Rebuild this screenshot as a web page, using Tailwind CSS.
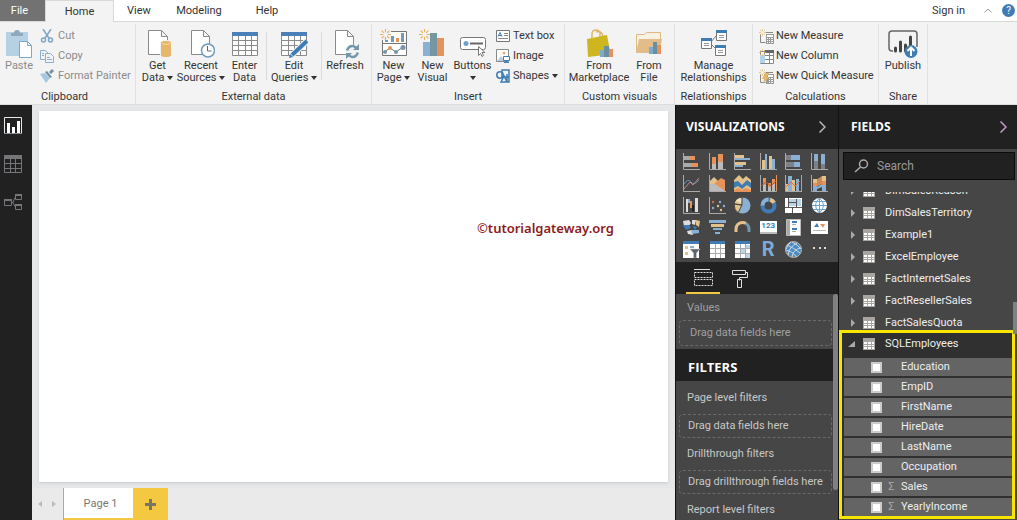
<!DOCTYPE html>
<html lang="en">
<head>
    <meta charset="UTF-8">
    <meta name="viewport" content="width=device-width, initial-scale=1.0">
    <title>Report Designer</title>
    <script src="https://cdn.jsdelivr.net/npm/@tailwindcss/browser@4"></script>
</head>
<body class="flex flex-col h-screen overflow-hidden bg-[#e6e7e8] font-['Roboto','Open_Sans',sans-serif] text-[11px] leading-3 text-[#333]">

    <!-- Shared icons -->
    <svg class="hidden">
        <symbol id="table" viewBox="0 0 12 12"><path fill="#a8a4a0" d="M0 0h12v12H0z"/><path fill="#fff" d="M1 4h3v2H1zM5 4h3v2H5zM9 4h2v2H9zM1 7h3v1H1zM5 7h3v1H5zM9 7h2v1H9zM1 9h3v2H1zM5 9h3v2H5zM9 9h2v2H9z"/></symbol>
        <symbol id="spark" viewBox="0 0 10 10"><path stroke="#e3b15f" d="M5 0v3M5 7v3M0 5h3M7 5h3M1.500 1.500l2 2M6.500 6.500l2 2M8.500 1.500l-2 2M3.500 6.500l-2 2"/></symbol>
        <symbol id="grid" viewBox="0 0 26 24"><path fill="#fff" stroke="#8a8a8a" d="M.5.5h25v23H.5z"/><path fill="#4a7fb8" d="M0 0h26v4H0z"/><path stroke="#8a8a8a" d="M0 8.500h26M0 13.500h26M0 18.500h26M6.500 4v20M13.500 4v20M19.500 4v20"/></symbol>
    </svg>

    <!-- Tabs -->
    <header class="flex h-[22px] shrink-0 items-stretch bg-white border-b border-[#d8dada]">
        <button class="w-[45px] pr-1.5 bg-[#727272] text-white">File</button>
        <nav class="flex">
            <button class="w-[69px] -mb-px bg-[#f3f3f3] border-x border-t border-[#d8dada]">Home</button>
            <button class="w-[50px]">View</button>
            <button class="w-[70px]">Modeling</button>
            <button class="w-[66px]">Help</button>
        </nav>
        <div class="ml-auto flex items-center">
            <button class="mr-[19px]">Sign in</button>
            <button aria-label="Collapse ribbon" class="mr-2.5"><svg width="8" height="5" fill="none" stroke="#999"><path d="M.5 4.500L4 1l3.500 3.500"/></svg></button>
            <button aria-label="Help" class="size-[13px] mr-0.5 rounded-full bg-[#3e7cb6] text-white text-[10px]">?</button>
        </div>
    </header>

    <!-- Ribbon -->
    <div class="flex h-[83px] shrink-0 bg-[#f3f3f3] border-b border-[#dcdddd] overflow-hidden">
        <section class="flex flex-col w-[136px] shrink-0 border-r border-[#e0e1e2] mt-0.5">
            <div class="flex flex-1 text-[#8b8b8b]">
                <button class="flex flex-col items-center w-9 pt-1 pl-0.5">
                    <svg class="h-8 w-7" viewBox="0 0 28 32"><path fill="#b4d2e4" d="M1 4h22v24H1z"/><path fill="#8fa9bb" d="M6 8V5h3q0-3 3-3t3 3h3v3z"/><path fill="#fff" stroke="#7fa9c9" d="M14.500 13.500h8l4 4v12h-12z"/><path fill="none" stroke="#7fa9c9" d="M22.500 13.500v4h4"/></svg>
                    <span>Paste</span>
                </button>
                <div class="flex flex-col pt-0.5 pl-1">
                    <button class="flex items-center gap-1 h-5"><svg width="14" height="14" fill="none" stroke="#7ea6c4" stroke-width="1.500"><path d="M3 0l6.500 10M11 0L4.500 10"/><circle cx="3.500" cy="11" r="2"/><circle cx="10.500" cy="11" r="2"/></svg>Cut</button>
                    <button class="flex items-center gap-1 h-5"><svg width="14" height="14" fill="#f3f3f3" stroke="#8ab0cb"><path d="M.5 1.500h5l2 2v7h-7z"/><path d="M5.500 4.500h5l3 3v6h-8zM7 8.500h3M7 10.500h5M2 4.500h2M2 6.500h2"/></svg>Copy</button>
                    <button class="flex items-center gap-1 h-5 whitespace-nowrap"><svg width="14" height="14"><path fill="#a3c9e2" d="M0 5l5-1 5 5-4 5z"/><path fill="#718fa6" d="M5 3l2-1 5 6-2 1zM9 3l3-3 2 2-3 3z"/></svg>Format Painter</button>
                </div>
            </div>
            <h2 class="mb-px pr-1.5 text-center">Clipboard</h2>
        </section>

        <section class="flex flex-col w-[236px] shrink-0 border-r border-[#e0e1e2] mt-0.5">
            <div class="flex flex-1">
                <button class="flex flex-col items-center w-[43px] pt-1">
                    <svg class="h-8 w-7" viewBox="0 0 28 32"><path fill="#fff" stroke="#8a8a8a" d="M4.500 2.500h13l6 6v18h-19zM17.500 2.500v6h6"/><path fill="#e6b768" stroke="#f3f3f3" d="M16.500 15q0-2.500 5.500-2.500t5.500 2.500v12q0 2.500-5.500 2.500t-5.500-2.500z"/><path fill="none" stroke="#f6dca9" d="M18 15.500q4 2 8 0"/></svg>
                    <span class="whitespace-nowrap">Get<br>Data <span class="inline-block align-middle border-x-3 border-t-4 border-x-transparent border-t-[#333]"></span></span>
                </button>
                <button class="flex flex-col items-center w-[44px] pt-1">
                    <svg class="h-8 w-7" viewBox="0 0 28 32"><path fill="#fff" stroke="#8a8a8a" d="M4.500 2.500h12l6 6v18h-18zM16.500 2.500v6h6"/><circle cx="21" cy="22.500" r="6.500" fill="#fff" stroke="#6f9cbd" stroke-width="1.500"/><path fill="none" stroke="#4d6d85" d="M20.500 18v5h4"/></svg>
                    <span class="whitespace-nowrap">Recent<br>Sources <span class="inline-block align-middle border-x-3 border-t-4 border-x-transparent border-t-[#333]"></span></span>
                </button>
                <button class="flex flex-col items-center w-[43px] pt-1">
                    <svg class="h-8 w-[26px] py-1"><use href="#grid"/></svg>
                    <span>Enter<br>Data</span>
                </button>
                <div class="w-px h-12 mt-2 bg-[#d9dadb]"></div>
                <button class="flex flex-col items-center w-[54px] pt-1">
                    <svg class="h-8 w-7" viewBox="0 0 28 32"><path fill="#fff" stroke="#8a8a8a" d="M1.500 4.500h25v23h-25zM1 12.500h26M1 17.500h26M1 22.500h26M8.500 8v20M14.500 8v20M20.500 8v20"/><path fill="#4a7fb8" d="M1 4h26v4H1z"/><path stroke="#f3f3f3" stroke-width="6" d="M11 28L27 13"/><path stroke="#3e7cb6" stroke-width="4" d="M12 27L27 13"/><path fill="#3e7cb6" d="M9 30l1-4 3 3z"/></svg>
                    <span class="whitespace-nowrap">Edit<br>Queries <span class="inline-block align-middle border-x-3 border-t-4 border-x-transparent border-t-[#333]"></span></span>
                </button>
                <div class="w-px h-12 mt-2 bg-[#d9dadb]"></div>
                <button class="flex flex-col items-center w-[46px] pt-1">
                    <svg class="h-8 w-7" viewBox="0 0 28 32"><path fill="#fff" stroke="#8a8a8a" d="M4.500 2.500h12l6 6v18h-18zM16.500 2.500v6h6"/><circle cx="21.500" cy="23.500" r="7" fill="#f3f3f3"/><path fill="none" stroke="#7497aa" stroke-width="2.500" d="M16 22.500q2-5 6-4.500l4 2M27 24.500q-2 5-6 4.500l-4-2"/><path fill="#7497aa" d="M28 16v6h-6zM15 31v-6h6z"/></svg>
                    <span>Refresh</span>
                </button>
            </div>
            <h2 class="mb-px text-center">External data</h2>
        </section>

        <section class="flex flex-col w-[193px] shrink-0 border-r border-[#e0e1e2] mt-0.5">
            <div class="flex flex-1">
                <button class="flex flex-col items-center w-[43px] pt-1">
                    <svg class="h-8 w-7" viewBox="0 0 28 32"><path fill="#fff" stroke="#777" d="M2.500 3.500h24v24h-24zM2 15.500h25"/><path fill="#f3f3f3" d="M0 0h11v12H0z"/><use href="#spark" y="1" width="11" height="11"/><path fill="#6f9cbd" d="M5 12h3v2H5zM11 8h3v6h-3zM21 5h3v9h-3z"/><path fill="#e5935a" d="M16 10h3v4h-3z"/><path fill="none" stroke="#777" d="M4 24l6-4 6 4 7-5"/><g fill="#7497aa"><circle cx="5" cy="24" r="2"/><circle cx="16" cy="24" r="2"/><circle cx="23" cy="19.500" r="2.500"/></g><circle cx="10" cy="20" r="2" fill="#e5935a"/></svg>
                    <span class="whitespace-nowrap">New<br>Page <span class="inline-block align-middle border-x-3 border-t-4 border-x-transparent border-t-[#333]"></span></span>
                </button>
                <button class="flex flex-col items-center w-[35px] pt-1">
                    <svg class="h-8 w-7" viewBox="0 0 28 32"><path fill="#8ab0d3" d="M4 14h7v14H4z"/><path fill="#7497a4" d="M11 5h7v23h-7z"/><path fill="#e5935a" d="M18 10h7v18h-7z"/><use href="#spark" y="1" width="11" height="11"/></svg>
                    <span>New<br>Visual</span>
                </button>
                <button class="flex flex-col items-center w-[45px] pt-1">
                    <svg class="h-8 w-7" viewBox="0 0 28 32"><rect x="1.500" y="9.500" width="25" height="12" rx="2" fill="#fff" stroke="#777"/><circle cx="7" cy="15.500" r="2.500" fill="#6fa0cc"/><path stroke="#666" stroke-width="2" d="M11 15.500h13"/><path fill="#fff" stroke="#777" d="M19.500 18.500v9l2-2 1.500 3 1.500-1-1.500-3h3z"/></svg>
                    <span>Buttons</span>
                    <span class="mt-1 border-x-3 border-t-4 border-x-transparent border-t-[#333]"></span>
                </button>
                <div class="flex flex-col pt-0.5 pl-px">
                    <button class="flex items-center gap-[3px] h-5"><svg width="14" height="12"><path fill="#fff" stroke="#777" d="M.5.5h13v11H.5z"/><path fill="none" stroke="#3e7cb6" d="M2 6.500l2-4 2 4M3 5.500h2"/><path stroke="#888" d="M8 3.500h4M8 5.500h4M2 8.500h10"/></svg>Text box</button>
                    <button class="flex items-center gap-[3px] h-5"><svg width="14" height="14"><path fill="#fff" stroke="#888" d="M.5.5h12v12H.5z"/><path fill="#b9cfdf" d="M1 12l4-5 3 4v1z"/><circle cx="8" cy="4" r="1.500" fill="#e6b768"/><path fill="#fff" stroke="#3e7cb6" d="M7.500 7.500h6v4h-6zM10.500 11.500v2M8 13.500h5"/></svg>Image</button>
                    <button class="flex items-center gap-[3px] h-5 whitespace-nowrap"><svg width="14" height="14" fill="none" stroke="#3e7cb6" stroke-width="1.500"><circle cx="4" cy="6" r="3.200"/><path d="M6 1h7v7H6zM5 13l3-6 3 6zM11 5v8h2V8"/></svg>Shapes <span class="border-x-3 border-t-4 border-x-transparent border-t-[#333]"></span></button>
                </div>
            </div>
            <h2 class="mb-px text-center">Insert</h2>
        </section>

        <section class="flex flex-col w-[110px] shrink-0 border-r border-[#e0e1e2] mt-0.5">
            <div class="flex flex-1">
                <button class="flex flex-col items-center w-[68px] pt-1">
                    <svg class="h-8 w-7" viewBox="0 0 28 32"><path fill="none" stroke="#e0b569" stroke-width="1.500" d="M7 11V6q0-4 4-4t4 4v4M11 4q5-2 7 4"/><path fill="#cdb61f" d="M2 11l20-4 3 16-5 4-17 2z"/><path fill="#7cabd0" d="M15 22h4v7h-4z"/><path fill="#6990a0" d="M19 18h5v11h-5z"/><path fill="#e5935a" d="M24 21h4v8h-4z"/></svg>
                    <span>From<br>Marketplace</span>
                </button>
                <button class="flex flex-col items-center w-[32px] pt-1">
                    <svg class="h-8 w-7" viewBox="0 0 28 32"><path fill="#fbf1e0" stroke="#dfb986" d="M1.500 24.500v-18h8l2-2h14v20z"/><path fill="#e2bd89" d="M4 11h23l-3 14H1z"/><path fill="#7cabd0" d="M14 19h4v7h-4z"/><path fill="#6990a0" d="M18 14h4v12h-4z"/><path fill="#e5935a" d="M22 17h4v9h-4z"/></svg>
                    <span>From<br>File</span>
                </button>
            </div>
            <h2 class="mb-px text-center">Custom visuals</h2>
        </section>

        <section class="flex flex-col w-[78px] shrink-0 border-r border-[#e0e1e2] mt-0.5">
            <button class="flex flex-1 flex-col items-center pt-1">
                <svg class="h-8 w-7" viewBox="0 0 28 32"><path fill="none" stroke="#777" d="M10 15l7-8M10 15l6 6"/><path fill="#fff" stroke="#777" d="M16.500 3.500h10v9h-10zM1.500 11.500h10v9h-10zM15.500 18.500h10v9h-10z"/><path fill="#3e7cb6" d="M16 2h11v3H16zM1 10h11v3H1zM15 17h11v3H15z"/><path stroke="#999" d="M19 7.500h5M19 9.500h5M4 15.500h5M4 17.500h5M18 22.500h5M18 24.500h5"/></svg>
                <span>Manage<br>Relationships</span>
            </button>
            <h2 class="mb-px text-center">Relationships</h2>
        </section>

        <section class="flex flex-col w-[126px] shrink-0 border-r border-[#e0e1e2] mt-0.5">
            <div class="flex flex-1 flex-col items-start pt-0.5 pl-1.5 whitespace-nowrap">
                <button class="flex items-center gap-0.5 h-5"><svg width="15" height="15"><path fill="none" stroke="#888" d="M1.500 5v8.500h5M7 3.500h7"/><path fill="#999" d="M7 5h8v10H7z"/><path fill="#fff" d="M8 6h6v2H8zM8 9h1v1H8zM10 9h1v1h-1zM12 9h2v1h-2zM8 11h1v1H8zM10 11h1v1h-1zM12 11h2v1h-2zM8 13h1v1H8zM10 13h1v1h-1zM12 13h2v1h-2z"/><use href="#spark" width="7" height="7"/></svg>New Measure</button>
                <button class="flex items-center gap-0.5 h-5"><svg width="15" height="15"><path fill="#fff" stroke="#888" d="M1.500 2.500h13v12h-13zM1 6.500h14M1 10.500h14M5.500 3v12M10.500 3v12"/><path fill="#666" d="M6 1h9v3H6z"/><path fill="#b5d3e8" d="M1 6h5v8H1z"/><use href="#spark" width="7" height="7"/></svg>New Column</button>
                <button class="flex items-center gap-0.5 h-5"><svg width="15" height="15"><path fill="none" stroke="#888" d="M1.500 5v8.500h5M7 3.500h7"/><path fill="#999" d="M7 5h8v10H7z"/><path fill="#fff" d="M9 6h5v2H9zM10 9h1v1h-1zM12 9h2v1h-2zM10 11h1v1h-1zM12 11h2v1h-2zM10 13h1v1h-1zM12 13h2v1h-2z"/><path fill="#e6b768" d="M6 4h4L8 8h2l-6 7 1-5H3z"/><use href="#spark" width="7" height="7"/></svg>New Quick Measure</button>
            </div>
            <h2 class="mb-px text-center">Calculations</h2>
        </section>

        <section class="flex flex-col w-[49px] shrink-0 border-r border-[#e0e1e2] mt-0.5">
            <button class="flex flex-1 flex-col items-center pt-1">
                <svg class="h-8 w-[30px]" viewBox="0 0 30 32"><path fill="none" stroke="#666" stroke-width="1.500" d="M5 23H4q-3 0-3-3V6q0-3 3-3h22q3 0 3 3v13"/><path stroke="#444" stroke-width="3" stroke-linecap="round" d="M7.500 20v3M12.500 14v9M17.500 17v6M22.500 9v8"/><circle cx="23" cy="23.500" r="6.500" fill="#3e7cb6"/><path fill="none" stroke="#fff" stroke-width="2" d="M23 28v-8M19.500 23l3.500-3.500 3.500 3.500"/></svg>
                <span>Publish</span>
            </button>
            <h2 class="mb-px text-center">Share</h2>
        </section>
    </div>

    <div class="flex flex-1 min-h-0">
        <!-- View switcher -->
        <nav class="flex flex-col items-center gap-5 w-8 shrink-0 pt-3 pr-1.5 bg-[#212121]">
            <button aria-label="Report"><svg width="18" height="18"><path fill="none" stroke="#e8e8e8" d="M.5.5h17v16H.5z"/><path fill="#fff" d="M3 6h3v10H3zM8 10h3v6H8zM13 4h3v12h-3z"/><path fill="#8a9299" d="M0 16h18v1H0z"/></svg></button>
            <button aria-label="Data"><svg width="18" height="18"><path fill="none" stroke="#75767a" d="M.5.5h17v17H.5zM0 8.500h18M0 13.500h18M6.500 4v14M11.500 4v14"/><path fill="#75767a" d="M0 0h18v4H0z"/></svg></button>
            <button aria-label="Relationships"><svg width="18" height="18" fill="none" stroke="#75767a"><path d="M.5 6.500h7v6h-7zM11.500 1.500h6v5h-6zM11.500 11.500h6v5h-6zM7 9.500h2l2-5M9 9.500l2 4"/><path stroke-width="2" d="M0 7h8M11 2h7M11 12h7"/></svg></button>
        </nav>

        <!-- Canvas -->
        <main class="flex flex-1 flex-col min-w-0">
            <div class="flex-1 my-1.5 mx-[7px] bg-white shadow-sm flex justify-center">
                <p class="mt-[109px] ml-[384px] text-[13px] leading-4 font-['Noto_Sans'] font-semibold text-[#8e1a1a] whitespace-nowrap">©tutorialgateway.org</p>
            </div>
            <footer class="flex h-8 shrink-0 bg-[#eaeaea] text-[#777]">
                <div class="flex items-center gap-2.5 w-8 pl-1.5 border-r border-[#aaa]">
                    <button aria-label="Previous page" class="border-y-3 border-r-4 border-y-transparent border-r-[#bbb]"></button>
                    <button aria-label="Next page" class="border-y-3 border-l-4 border-y-transparent border-l-[#bbb]"></button>
                </div>
                <button class="w-[69px] pt-0.5 pl-1 bg-white border-b-2 border-[#f5c842]">Page 1</button>
                <button aria-label="Add page" class="flex items-center justify-center w-[35px] bg-[#f5c842]"><svg width="11" height="11" stroke="#7a7468" stroke-width="3"><path d="M5.500 0v11M0 5.500h11"/></svg></button>
            </footer>
        </main>

        <!-- Visualizations -->
        <aside class="flex flex-col w-[164px] shrink-0 bg-[#464646] border-x border-[#111] text-[#c8c8c8]">
            <header class="flex h-11 shrink-0 items-center justify-between pl-2.5 pr-3 bg-[#212121]">
                <h2 class="text-xs font-['Open_Sans'] font-bold text-white">VISUALIZATIONS</h2>
                <button aria-label="Collapse visualizations"><svg width="7" height="12" fill="none" stroke="#b8b8b8" stroke-width="1.500"><path d="M.5.5L6 6 .5 11.500"/></svg></button>
            </header>
            <div class="grid grid-cols-6 gap-y-[5px] shrink-0 pl-[3px] pr-1.5 pt-1 pb-1 justify-items-center">
                <button aria-label="Stacked bar"><svg width="17" height="17"><path stroke="#aaa" fill="none" d="M.5 0v16.500H17"/><path fill="#aaa" d="M1 3h5v4H1zM1 10h7v4H1z"/><path fill="#e5935a" d="M6 3h6v4H6zM8 10h7v4H8z"/></svg></button>
                <button aria-label="Stacked column"><svg width="17" height="17"><path stroke="#aaa" fill="none" d="M.5 0v16.500H17"/><path fill="#bbb" d="M3 11h4v5H3zM9 9h5v7H9z"/><path fill="#e5935a" d="M3 4h4v7H3zM9 1h5v8H9z"/></svg></button>
                <button aria-label="Clustered bar"><svg width="17" height="17"><path stroke="#aaa" fill="none" d="M.5 0v16.500H17"/><path fill="#e3c18a" d="M1 2h9v3H1zM1 9h11v3H1z"/><path fill="#8ab0d3" d="M1 5h15v2H1zM1 12h8v2H1z"/></svg></button>
                <button aria-label="Clustered column"><svg width="17" height="17"><path stroke="#aaa" fill="none" d="M.5 0v16.500H17"/><path fill="#e3c18a" d="M2 7h3v9H2zM9 3h3v13H9z"/><path fill="#8ab0d3" d="M5 1h2v15H5zM12 6h3v10h-3z"/></svg></button>
                <button aria-label="100% stacked bar"><svg width="17" height="17"><path stroke="#aaa" fill="none" d="M.5 0v16.500H17"/><path fill="#7e8188" d="M1 2h5v5H1zM1 9h8v5H1z"/><path fill="#8ab0d3" d="M6 2h9v5H6zM9 9h6v5H9z"/></svg></button>
                <button aria-label="100% stacked column"><svg width="17" height="17"><path stroke="#aaa" fill="none" d="M.5 0v16.500H17"/><path fill="#8ab0d3" d="M3 1h4v7H3zM10 1h4v10h-4z"/><path fill="#7e8188" d="M3 8h4v8H3zM10 11h4v5h-4z"/></svg></button>

                <button aria-label="Line"><svg width="17" height="17" fill="none"><path stroke="#aaa" d="M.5 0v16.500H17"/><path stroke="#6b8fb5" d="M1 9q4-6 7-2t8-2"/><path stroke="#b88" d="M1 14l6-7 3 3 6-7"/></svg></button>
                <button aria-label="Area"><svg width="17" height="17"><path fill="#e3c18a" d="M1 6l4-4 5 5v4H1z"/><path fill="#e5935a" d="M5 9l7-6 4 2v11H9z"/><path fill="#bbb" d="M1 9l5 0 9 6v1H1z"/><path stroke="#aaa" fill="none" d="M.5 0v16.500H17"/></svg></button>
                <button aria-label="Stacked area"><svg width="17" height="17"><path fill="#e3c18a" d="M0 5l5-5 4 4 3-3 5 4v11H0z"/><path fill="#3f7cb5" d="M0 7l4-1 4 4 5-5 4 3v6H0z"/><path fill="#e3c18a" d="M0 13l4-2 4 3 5-4 4 3v3H0z"/><path fill="#e5935a" d="M0 15l4-2 4 2 4-2 5 2v2H0z"/></svg></button>
                <button aria-label="Line and stacked column"><svg width="17" height="17"><path stroke="#aaa" fill="none" d="M.5 0v16.500H16.500V0"/><path fill="#bbb" d="M3 10h3v6H3zM8 12h3v4H8zM12 9h3v7h-3z"/><path fill="#e5935a" d="M3 3h3v7H3zM8 8h3v4H8zM12 4h3v5h-3zM16 0h1v16h-1z"/><path stroke="#a54" fill="none" d="M1 11l5-4 5 4 5-5"/></svg></button>
                <button aria-label="Line and clustered column"><svg width="17" height="17"><path stroke="#aaa" fill="none" d="M.5 0v16.500H17"/><path fill="#8ab0d3" d="M3 1h4v15H3zM11 4h3v12h-3z"/><path fill="#e3c18a" d="M7 5h3v11H7zM1 9h2v7H1z"/><path fill="#e5935a" d="M16 0h1v16h-1z"/><path stroke="#d76b4a" fill="none" d="M1 12l5-5 4 4 5-5"/></svg></button>
                <button aria-label="Ribbon"><svg width="17" height="17"><path stroke="#aaa" fill="none" d="M.5 0v16.500H17"/><path fill="#c98a55" d="M5 5l6-4v8l-6 3z"/><path fill="#e3c18a" d="M2 4h4v4H2zM11 1h4v5h-4z"/><path fill="#e5935a" d="M2 8h4v3H2zM11 6h4v4h-4z"/><path fill="#8ab0d3" d="M2 11h4v5H2zM11 10h4v6h-4zM6 12l5-3v3l-5 2z"/></svg></button>

                <button aria-label="Waterfall"><svg width="17" height="17"><path stroke="#aaa" fill="none" d="M.5 0v16.500H17"/><path fill="#ddd" d="M3 2h2v13H3zM12 1h3v14h-3z"/><path fill="#8ab0d3" d="M5 2h2v4H5z"/><path fill="#e5935a" d="M7 4h2v7H7z"/><path fill="#222" d="M9 8h2v6H9z"/></svg></button>
                <button aria-label="Scatter"><svg width="17" height="17"><path stroke="#aaa" fill="none" d="M.5 0v16.500H17"/><g fill="#8ab0d3"><circle cx="4" cy="11" r="1.200"/><circle cx="11" cy="5" r="1.200"/><circle cx="15" cy="9" r="1.200"/></g><g fill="#e3c18a"><circle cx="9" cy="9" r="1.200"/><circle cx="12" cy="13" r="1.200"/></g><circle cx="4" cy="5" r="1.200" fill="#d76b4a"/></svg></button>
                <button aria-label="Pie"><svg width="17" height="17"><circle cx="8.500" cy="8.500" r="8" fill="#8ab0d3"/><path fill="#e3c18a" stroke="#464646" d="M8 8V0Q1 1 0 7zM8 8L0 7q0 6 4 9z"/><path fill="#f2e2c4" d="M7 6V1Q3 2 2 4z"/></svg></button>
                <button aria-label="Donut"><svg width="17" height="17" fill="none" stroke-width="4"><circle cx="8.500" cy="8.500" r="6" stroke="#3f7cb5"/><path stroke="#8ab0d3" d="M2.500 8.500a6 6 0 0 1 6-6"/><path stroke="#e3c18a" d="M10 2.700a6 6 0 0 1 4 3"/></svg></button>
                <button aria-label="Treemap"><svg width="17" height="17"><path fill="#fff" d="M0 1h17v15H0z"/><path fill="#b9d5e8" d="M4 2h12v7H4z"/><path stroke="#555" fill="none" d="M3.500 1v9M0 10.500h17M11.500 2v9M7.500 10v6M4 5.500h7"/></svg></button>
                <button aria-label="Map"><svg width="17" height="17"><circle cx="8.500" cy="8.500" r="7.500" fill="#fff"/><path fill="none" stroke="#6fa3cf" d="M1 8.500h15M2.500 4.500h12M2.500 12.500h12M8.500 1v15M8.500 1q-8 7 0 15M8.500 1q8 7 0 15"/></svg></button>

                <button aria-label="Filled map"><svg width="17" height="17"><path fill="#ddd" d="M0 2l6-1 2 3-3 4-4-1zM9 1h4l-1 5-3-1zM4 12l5-1 1 5-5-1z"/><path fill="#3f7cb5" d="M0 6h6l2 3-5 2zM10 7l4 1-2 3z"/><path fill="#e3c18a" d="M13 1l4 1-1 6-3-2z"/><path fill="#8ab0d3" d="M8 11h8v3l-7 1z"/></svg></button>
                <button aria-label="Funnel"><svg width="17" height="17"><path fill="#8ab0d3" d="M0 1h17v3H0zM4 9h9v2H4zM6 13h5v2H6z"/><path fill="#e3c18a" d="M2 5h13v3H2z"/></svg></button>
                <button aria-label="Gauge"><svg width="17" height="17" fill="none" stroke-width="3"><path stroke="#e3c18a" d="M2 13V10a6.500 6.500 0 0 1 10-5.500"/><path stroke="#7497aa" d="M12 4.500a6.500 6.500 0 0 1 3 5.500v3"/></svg></button>
                <button aria-label="Card" class="flex h-[17px] w-[17px] items-center justify-center"><span class="h-[13px] w-[17px] bg-white text-[8px] leading-[10px] font-bold text-[#3f7cb5] border-b-2 border-[#bbb]">123</span></button>
                <button aria-label="Multi-row card"><svg width="17" height="17"><path fill="#fff" stroke="#bbb" d="M1.500.5h14v16h-14z"/><path fill="#aaa" d="M2 1h3v15H2z"/><path fill="#3f7cb5" d="M7 2h5v2H7zM7 9h5v2H7z"/><path fill="#aaa" d="M7 5h4v1H7zM7 12h4v1H7z"/></svg></button>
                <button aria-label="KPI"><svg width="17" height="17"><path fill="#fff" d="M0 2h17v13H0z"/><path fill="#3f7cb5" d="M3 8l3-4 2 4z"/><path fill="#e5935a" d="M9 5h5l-2 4z"/><path fill="#bbb" d="M2 11h13v1H2z"/></svg></button>

                <button aria-label="Slicer"><svg width="17" height="17"><path fill="#fff" d="M0 0h16v17H0z"/><path fill="#3f7cb5" d="M0 0h16v3H0z"/><path fill="#e3c18a" d="M2 5h3v3H2zM2 11h3v3H2z"/><path fill="#8ab0d3" d="M7 5h4v2H7z"/><path fill="#5d6470" stroke="#ccc" stroke-width=".5" d="M7 8h10l-3.500 4v5h-3v-5z"/></svg></button>
                <button aria-label="Table"><svg width="17" height="17"><path fill="#fff" d="M1 0h15v17H1z"/><path fill="#3f7cb5" d="M1 0h15v3H1z"/><path stroke="#aaa" d="M1 7.500h15M1 12.500h15M6.500 3v14M11.500 3v14"/></svg></button>
                <button aria-label="Matrix"><svg width="17" height="17"><path fill="#fff" d="M1 0h15v17H1z"/><path fill="#3f7cb5" d="M1 0h15v3H1z"/><path fill="#b9d5e8" d="M7 8h4v4H7zM12 13h4v4h-4zM12 4h4v3h-4z"/><path stroke="#aaa" d="M1 7.500h15M1 12.500h15M6.500 3v14M11.500 3v14"/></svg></button>
                <button aria-label="R script visual" class="h-[17px] text-xl leading-[17px] font-bold text-[#7cabd8]">R</button>
                <button aria-label="ArcGIS map"><svg width="17" height="17"><circle cx="8.500" cy="8.500" r="8" fill="#4c8bc4" stroke="#c9b08a"/><path fill="none" stroke="#c8d8e4" d="M2 4q7 3 13 8M1 9q6 1 11 7M7 1q6 3 9 7M12 2Q4 6 3 14M16 7q-8 1-9 9M6 1Q2 4 1 8"/></svg></button>
                <button aria-label="More visuals"><svg width="17" height="17" fill="#ddd"><path d="M2 6h2v2H2zM8 6h2v2H8zM13 6h2v2h-2z"/></svg></button>
            </div>
            <div class="flex h-8 shrink-0 pl-2.5 bg-[#212121]">
                <button aria-label="Fields" class="flex w-[34px] items-center justify-center border-b-2 border-[#f5c842]"><svg width="19" height="19" fill="none" stroke="#e0e0e0"><path d="M0 1.500h16"/><path stroke-dasharray="2 1" d="M.5 4.500h18v5H.5zM.5 11.500h18v6H.5z"/></svg></button>
                <button aria-label="Format" class="flex w-10 items-center justify-center"><svg width="18" height="19" fill="none" stroke="#e0e0e0"><path d="M1.500 1.500h13v4h-13zM14.500 3.500h2v5h-8v3M6.500 10.500h4v8h-4z"/></svg></button>
            </div>
            <div class="relative flex-1 min-h-0 overflow-hidden">
                <div class="h-[55px] pt-2 pl-[3px] pr-1.5 text-[#a0a0a0]">
                    <h3 class="pl-2">Values</h3>
                    <div class="mt-1.5 flex h-[26px] items-center rounded-sm border border-dashed border-[#6a6a6a] pl-2.5">Drag data fields here</div>
                </div>
                <h2 class="flex h-8 items-center pt-1 pl-3 bg-[#212121] text-[13px] font-['Open_Sans'] font-bold text-white">FILTERS</h2>
                <div class="pl-[3px] pr-1.5 pt-px">
                    <h3 class="h-8 pt-2.5 pl-2">Page level filters</h3>
                    <div class="flex h-6 items-center rounded-sm border border-dashed border-[#6a6a6a] pl-2">Drag data fields here</div>
                    <h3 class="h-8 pt-2.5 pl-2">Drillthrough filters</h3>
                    <div class="flex h-6 items-center rounded-sm border border-dashed border-[#6a6a6a] pl-2 whitespace-nowrap">Drag drillthrough fields here</div>
                    <h3 class="h-8 pt-2.5 pl-2">Report level filters</h3>
                </div>
                <div class="absolute top-0 right-0 h-[196px] w-[5px] rounded-full bg-[#808080]"></div>
            </div>
        </aside>

        <!-- Fields -->
        <aside class="flex flex-col w-[178px] shrink-0 bg-[#464646] text-[#eee]">
            <header class="flex h-11 shrink-0 items-center justify-between pl-3 pr-2.5 bg-[#212121]">
                <h2 class="text-xs font-['Open_Sans'] font-bold text-white">FIELDS</h2>
                <button aria-label="Collapse fields"><svg width="7" height="12" fill="none" stroke="#c59bc8" stroke-width="1.500"><path d="M.5.5L6 6 .5 11.500"/></svg></button>
            </header>
            <label class="flex h-7 shrink-0 items-center gap-2 mt-[3px] ml-1 mr-0.5 pl-2.5 bg-[#212121] border border-[#0c0c0c]">
                <svg class="shrink-0" width="15" height="14" fill="none" stroke="#aaa" stroke-width="1.500"><circle cx="9.500" cy="5" r="4"/><path d="M6.500 8L1 13"/></svg>
                <input type="text" aria-label="Search" placeholder="Search" class="w-full min-w-0 bg-transparent text-xs outline-none placeholder-[#999]">
            </label>
            <div class="relative flex-1 min-h-0 mt-3 overflow-hidden">
                <ul class="-mt-3">
                    <li><button class="flex w-full h-[22px] items-center pl-3"><span class="border-y-4 border-l-4 border-y-transparent border-l-[#aaa]"></span><svg class="size-3 ml-2 mr-2.5"><use href="#table"/></svg>DimSalesReason</button></li>
                    <li><button class="flex w-full h-[22px] items-center pl-3"><span class="border-y-4 border-l-4 border-y-transparent border-l-[#aaa]"></span><svg class="size-3 ml-2 mr-2.5"><use href="#table"/></svg>DimSalesTerritory</button></li>
                    <li><button class="flex w-full h-[22px] items-center pl-3"><span class="border-y-4 border-l-4 border-y-transparent border-l-[#aaa]"></span><svg class="size-3 ml-2 mr-2.5"><use href="#table"/></svg>Example1</button></li>
                    <li><button class="flex w-full h-[22px] items-center pl-3"><span class="border-y-4 border-l-4 border-y-transparent border-l-[#aaa]"></span><svg class="size-3 ml-2 mr-2.5"><use href="#table"/></svg>ExcelEmployee</button></li>
                    <li><button class="flex w-full h-[22px] items-center pl-3"><span class="border-y-4 border-l-4 border-y-transparent border-l-[#aaa]"></span><svg class="size-3 ml-2 mr-2.5"><use href="#table"/></svg>FactInternetSales</button></li>
                    <li><button class="flex w-full h-[22px] items-center pl-3"><span class="border-y-4 border-l-4 border-y-transparent border-l-[#aaa]"></span><svg class="size-3 ml-2 mr-2.5"><use href="#table"/></svg>FactResellerSales</button></li>
                    <li><button class="flex w-full h-[22px] items-center pl-3"><span class="border-y-4 border-l-4 border-y-transparent border-l-[#aaa]"></span><svg class="size-3 ml-2 mr-2.5"><use href="#table"/></svg>FactSalesQuota</button></li>
                </ul>
                <section class="border-3 border-[#f7e600] mr-0.5 -mt-1 bg-[#303030]">
                    <button class="flex w-full h-[22px] items-center pl-1.5"><svg width="7" height="6"><path fill="#aaa" d="M7 0v6H0z"/></svg><svg class="size-3 ml-2 mr-2.5"><use href="#table"/></svg>SQLEmployees</button>
                    <div class="flex flex-col gap-0.5 pt-[3px] pl-0.5">
                        <label class="flex h-[18px] items-center pl-[27px] bg-[#646464]"><input type="checkbox" class="appearance-none size-[11px] bg-white border-2 border-[#ccc]"><span class="w-[19px]"></span>Education</label>
                        <label class="flex h-[18px] items-center pl-[27px] bg-[#646464]"><input type="checkbox" class="appearance-none size-[11px] bg-white border-2 border-[#ccc]"><span class="w-[19px]"></span>EmpID</label>
                        <label class="flex h-[18px] items-center pl-[27px] bg-[#646464]"><input type="checkbox" class="appearance-none size-[11px] bg-white border-2 border-[#ccc]"><span class="w-[19px]"></span>FirstName</label>
                        <label class="flex h-[18px] items-center pl-[27px] bg-[#646464]"><input type="checkbox" class="appearance-none size-[11px] bg-white border-2 border-[#ccc]"><span class="w-[19px]"></span>HireDate</label>
                        <label class="flex h-[18px] items-center pl-[27px] bg-[#646464]"><input type="checkbox" class="appearance-none size-[11px] bg-white border-2 border-[#ccc]"><span class="w-[19px]"></span>LastName</label>
                        <label class="flex h-[18px] items-center pl-[27px] bg-[#646464]"><input type="checkbox" class="appearance-none size-[11px] bg-white border-2 border-[#ccc]"><span class="w-[19px]"></span>Occupation</label>
                        <label class="flex h-[18px] items-center pl-[27px] bg-[#646464]"><input type="checkbox" class="appearance-none size-[11px] bg-white border-2 border-[#ccc]"><span class="w-[19px] text-center text-[#aaa]">Σ</span>Sales</label>
                        <label class="flex h-[18px] items-center pl-[27px] bg-[#646464]"><input type="checkbox" class="appearance-none size-[11px] bg-white border-2 border-[#ccc]"><span class="w-[19px] text-center text-[#aaa]">Σ</span>YearlyIncome</label>
                    </div>
                </section>
                <div class="absolute top-[110px] right-0 w-1 h-8 bg-[#808080]"></div>
            </div>
        </aside>
    </div>
</body>
</html>
